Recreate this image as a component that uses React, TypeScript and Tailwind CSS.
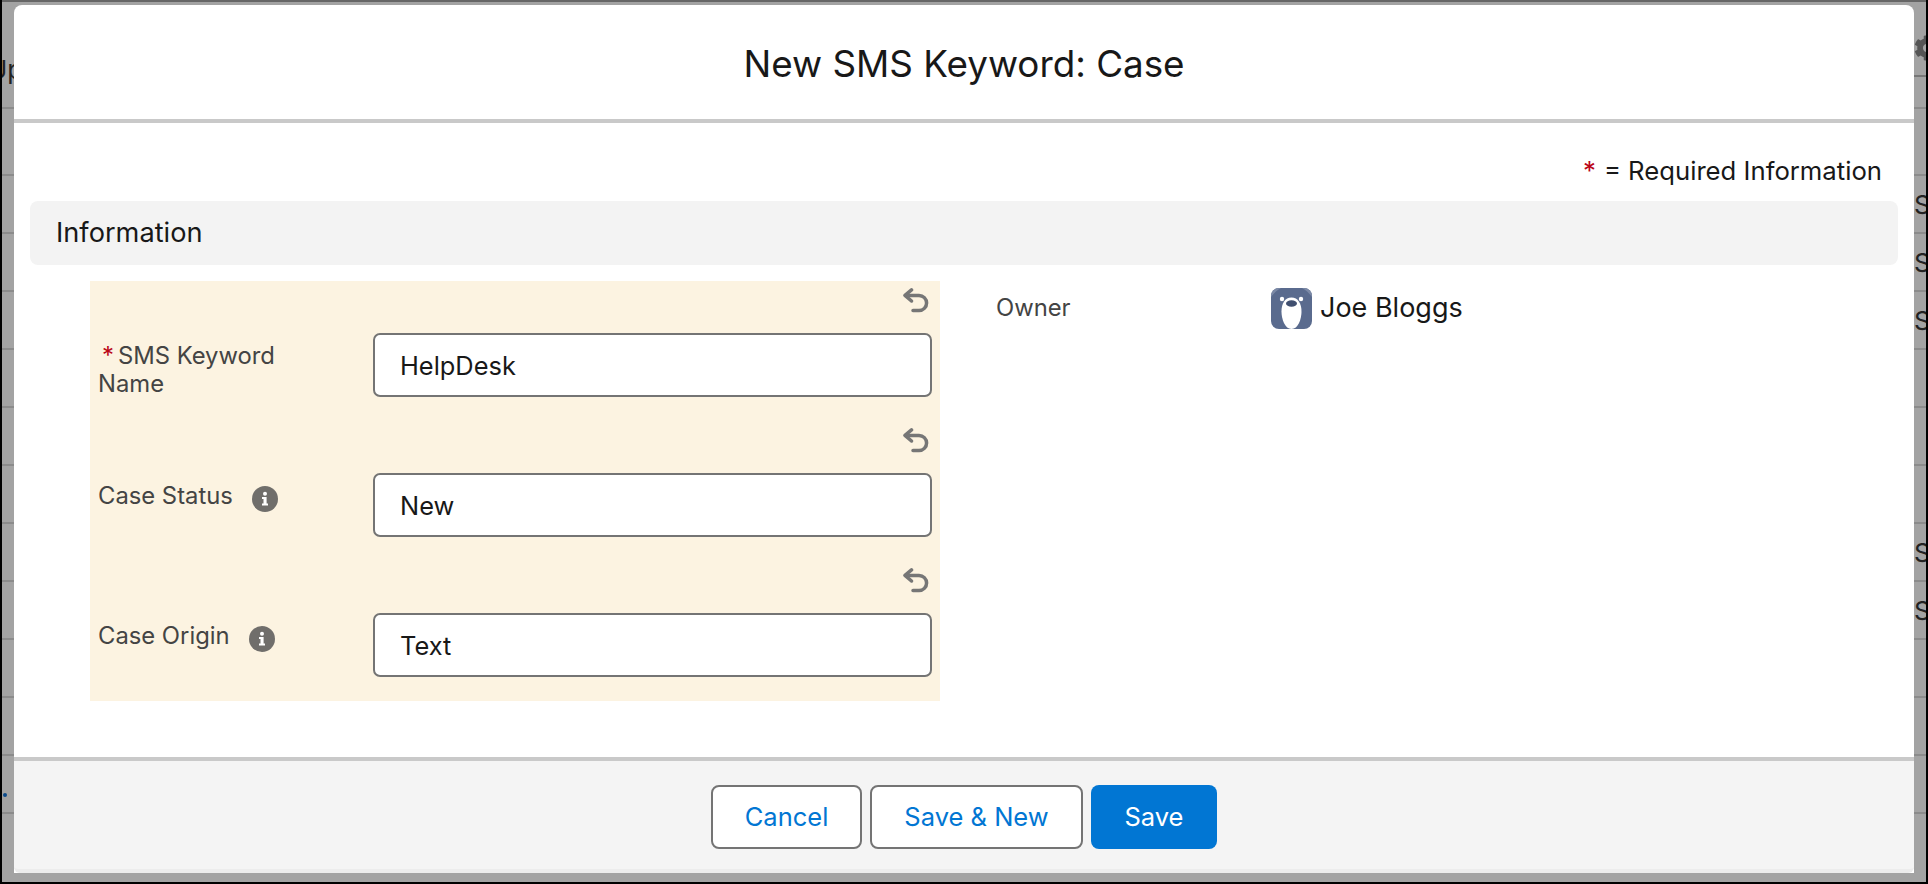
import React from "react";
import { FaCog } from "react-icons/fa";

const font = "font-['Inter','Liberation_Sans',sans-serif]";

function UndoIcon() {
  return (
    <svg width="26" height="25" viewBox="0 0 26 25" fill="none" stroke="#767676" strokeWidth="3.5" strokeLinecap="round" strokeLinejoin="round">
      <path d="M8.500 1.900 2 7.400l6.500 5.600" />
      <path d="M2.400 7.400H16a7.600 7.600 0 0 1 7.600 7.600A7.600 7.600 0 0 1 16 22.600H10" />
    </svg>
  );
}

function InfoIcon() {
  return (
    <svg width="26" height="26" viewBox="0 0 26 26">
      <circle cx="13" cy="13" r="13" fill="#706e6b" />
      <circle cx="13" cy="7.800" r="2" fill="#fff" />
      <path d="M10 11h4.600v6.600H16v2h-6v-2h1.500v-4.600H10z" fill="#fff" />
    </svg>
  );
}

function BearIcon() {
  return (
    <svg width="41" height="41" viewBox="0 0 41 41">
      <rect width="41" height="41" rx="8" fill="#5a6b8e" />
      <path d="M0 8a8 8 0 0 1 8-8h2C6 2 3 5 0 9zM41 8a8 8 0 0 0-8-8h-2c4 2 7 5 10 9z" fill="#7b89a6" />
      <circle cx="11" cy="11" r="2.200" fill="#fff" />
      <circle cx="30" cy="11" r="2.200" fill="#fff" />
      <path d="M20.500 9.500c6.500 0 10 6 10 14S27 41 20.500 41 10.500 31.500 10.500 23.500 14 9.500 20.500 9.500z" fill="#fff" />
      <ellipse cx="20.500" cy="15.500" rx="5.500" ry="3.200" fill="#404f70" />
    </svg>
  );
}

function Field({ label, value }: { label: React.ReactNode; value: string }) {
  return (
    <div className="flex h-[140px] flex-col pt-[7px]">
      <div className="flex h-[45px] justify-end pr-[11px]">
        <UndoIcon />
      </div>
      <div className="flex items-start pl-[8px] pr-[8px]">
        <div className="w-[275px] pt-[9px] text-[23.800px] leading-[28px] text-[#444444]">{label}</div>
        <div className="flex h-[64px] flex-1 items-center rounded-[7px] border-2 border-[#747474] bg-white pl-[25px] pt-[2px] text-[25.400px] text-[#181818]">
          {value}
        </div>
      </div>
    </div>
  );
}

function BgRow({ h, s }: { h: string; s?: boolean }) {
  return (
    <div className={`flex ${h} items-center justify-end border-b-2 border-[#8b8b8b] text-[26px] text-[#222]`}>
      <div className="w-[12px] overflow-hidden">{s ? "S" : null}</div>
    </div>
  );
}

export default function App() {
  return (
    <div className={`${font} relative h-[884px] w-[1928px] overflow-hidden bg-black px-[2px] pb-[2px]`}>
      <div className="h-full overflow-hidden border-t-2 border-[#666] bg-[#a3a3a3]">
        <div className="flex h-[107px] justify-between border-b-2 border-[#8b8b8b]">
          <div className="ml-[-14px] mt-[53px] text-[26px] leading-[30px] text-[#222]">Up</div>
          <div className="h-[75px] w-[12px] overflow-hidden border-b-2 border-[#777] pt-[33px]">
            <FaCog className="text-[26px] text-[#555]" />
          </div>
        </div>
        <BgRow h="h-[67px]" />
        <BgRow h="h-[58px]" s />
        <BgRow h="h-[58px]" s />
        <BgRow h="h-[58px]" s />
        <BgRow h="h-[58px]" />
        <BgRow h="h-[58px]" />
        <BgRow h="h-[58px]" />
        <BgRow h="h-[58px]" s />
        <BgRow h="h-[58px]" s />
        <BgRow h="h-[58px]" />
        <BgRow h="h-[58px]" />
        <div className="flex h-[58px] items-end border-b-2 border-[#8b8b8b] pb-[15px] pl-[1px]">
          <div className="size-[4px] rounded-full bg-[#0b4a8a]" />
        </div>
      </div>

      <div className="absolute left-[14px] top-[5px] flex h-[868px] w-[1900px] flex-col rounded-t-[8px] bg-white">
        <header className="flex h-[118px] shrink-0 items-center justify-center border-b-4 border-[#c9c9c9] pt-[4px] text-[36.800px] text-[#181818]">
          New SMS Keyword: Case
        </header>

        <main className="flex-1">
          <div className="flex h-[78px] items-center justify-end pr-[32px] pt-[18px] text-[25.700px] text-[#181818]">
            <span className="mr-[8px] text-[#ba0517]">*</span>= Required Information
          </div>
          <div className="mx-[16px] flex h-[64px] items-center rounded-[8px] bg-[#f3f3f3] pl-[26px] pt-[1px] text-[27.200px] text-[#181818]">
            Information
          </div>
          <div className="flex pl-[76px] pt-[16px]">
            <div className="w-[850px] bg-[#fcf3e1]">
              <Field
                value="HelpDesk"
                label={
                  <span className="block">
                    <span className="ml-[4px] mr-[4px] text-[#ba0517]">*</span>SMS Keyword
                    <br />
                    Name
                  </span>
                }
              />
              <Field
                value="New"
                label={
                  <span className="flex items-start">
                    Case Status
                    <span className="ml-[19px] mt-[4px]"><InfoIcon /></span>
                  </span>
                }
              />
              <Field
                value="Text"
                label={
                  <span className="flex items-start">
                    Case Origin
                    <span className="ml-[19px] mt-[4px]"><InfoIcon /></span>
                  </span>
                }
              />
            </div>
            <div className="flex h-[48px] flex-1 items-center pl-[56px] pt-[6px]">
              <span className="w-[275px] text-[23.800px] text-[#444444]">Owner</span>
              <BearIcon />
              <span className="ml-[8px] text-[27px] text-[#181818]">Joe Bloggs</span>
            </div>
          </div>
        </main>

        <footer className="flex h-[116px] shrink-0 items-start justify-center gap-[8px] rounded-b-[6px] border-t-4 border-b-4 border-t-[#c9c9c9] border-b-[#ececec] bg-[#f4f4f4] pt-[24px]">
          <button className="h-[64px] w-[151px] rounded-[8px] border-2 border-[#747474] bg-white pt-[1px] text-[25.500px] text-[#0176d3]">Cancel</button>
          <button className="h-[64px] w-[213px] rounded-[8px] border-2 border-[#747474] bg-white pt-[1px] text-[25.500px] text-[#0176d3]">Save &amp; New</button>
          <button className="h-[64px] w-[126px] rounded-[8px] bg-[#0176d3] pt-[1px] text-[25.500px] text-white">Save</button>
        </footer>
      </div>
    </div>
  );
}
